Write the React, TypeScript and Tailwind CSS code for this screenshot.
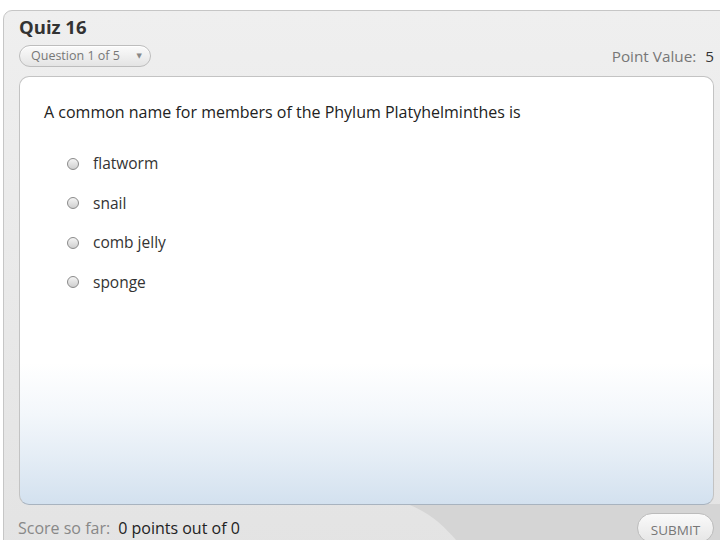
import { useState } from "react";

const OPTIONS = ["flatworm", "snail", "comb jelly", "sponge"];

export default function App() {
  const [picked, setPicked] = useState<string | null>(null);

  return (
    <div
      className="h-[540px] w-[720px] overflow-hidden bg-white pl-[3px] pt-[10px]"
      style={{ fontFamily: '"Open Sans", "DejaVu Sans", sans-serif' }}
    >
      <div className="relative flex h-[560px] w-[740px] flex-col rounded-tl-[9px] border border-[#c6c6c6] bg-gradient-to-b from-[#efefef] to-[#e3e3e3] pl-[15px]">
        {/* footer backdrop curve */}
        <svg
          className="absolute left-0 top-[493px] h-[50px] w-[740px]"
          viewBox="0 0 740 50"
          preserveAspectRatio="none"
        >
          <path d="M403 0 C425 8 440 22 452 36 L464 50 L740 50 L740 0 Z" fill="#d5d5d5" />
        </svg>

        <div className="relative w-[695px]">
          <h1 className="mt-[4px] text-[18.5px] font-bold leading-[24px] text-[#333]">Quiz 16</h1>

          <div className="mt-[6px] flex h-[22px] items-center justify-between">
            <button className="flex h-[22px] w-[132px] items-center justify-between rounded-full border border-[#bdbdbd] bg-gradient-to-b from-[#fbfbfb] to-[#e4e4e4] pl-[11px] pr-[8px] text-[12.5px] text-[#777] shadow-[inset_0_1px_0_#fff]">
              <span>Question 1 of 5</span>
              <span className="text-[7px] text-[#888]">▼</span>
            </button>
            <div className="text-[15.3px] text-[#777]">
              Point Value:<span className="ml-[9px] text-[#333]">5</span>
            </div>
          </div>

          <div className="mt-[9px] h-[429px] w-[695px] rounded-[10px] border border-[#c3c3c3] border-b-[#a8b3bf] bg-[linear-gradient(to_bottom,#ffffff_0%,#ffffff_67%,#f3f7fb_79%,#e3ecf5_90%,#d3e1ef_100%)] pl-[24px] pt-[25px]">
            <p className="text-[16px] leading-[20px] text-[#222]">
              A common name for members of the Phylum Platyhelminthes is
            </p>
            <div className="mt-[22px] flex flex-col">
              {OPTIONS.map((o) => (
                <label
                  key={o}
                  className="flex h-[39.5px] cursor-pointer items-center pl-[23px] text-[15.5px] text-[#333]"
                  onClick={() => setPicked(o)}
                >
                  <span className="flex h-[12px] w-[12px] items-center justify-center rounded-full border border-[#8a8a8a] bg-gradient-to-b from-[#f4f4f4] to-[#cfcfcf]">
                    {picked === o && <span className="h-[5px] w-[5px] rounded-full bg-[#333]" />}
                  </span>
                  <span className="ml-[14px]">{o}</span>
                </label>
              ))}
            </div>
          </div>

          <div className="mt-[8px] flex items-start justify-between">
            <div className="pt-[5px] text-[16px] leading-[20px]">
              <span className="ml-[-1px] text-[#888]">Score so far:</span>
              <span className="ml-[8px] text-[#222]">0 points out of 0</span>
            </div>
            <button className="flex h-[30px] w-[77px] items-start justify-center rounded-full border border-[#bcbcbc] bg-gradient-to-b from-[#fafafa] to-[#e6e6e6] pt-[6px] text-[13.5px] text-[#777]">
              SUBMIT
            </button>
          </div>
        </div>
      </div>
    </div>
  );
}
